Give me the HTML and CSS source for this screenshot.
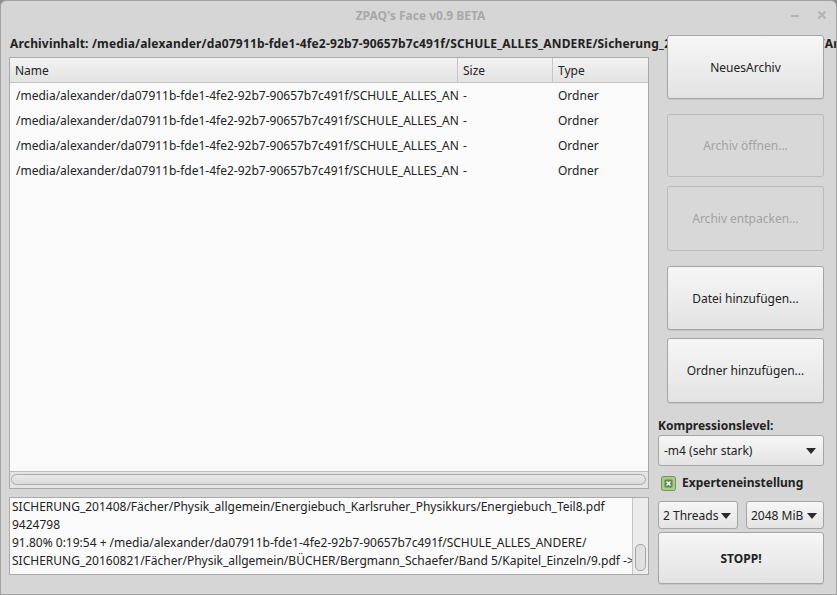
FILE: index.html
```html
<!DOCTYPE html>
<html lang="de">
<head>
    <meta charset="UTF-8">
    <meta name="viewport" content="width=device-width, initial-scale=1.0">
    <title>ZPAQ's Face v0.9 BETA</title>
    <link rel="stylesheet" href="styles.css">
</head>
<body>
    <div class="window">
        <!-- Title bar -->
        <div class="titlebar">
            <span class="title">ZPAQ's Face v0.9 BETA</span>
            <div class="controls">
                <svg width="10" height="10" viewBox="0 0 10 10"><rect x="1" y="5" width="8" height="2" fill="#b4b4b4"/></svg>
                <svg width="10" height="10" viewBox="0 0 10 10"><path d="M1.5 1.5 L8.5 8.5 M8.5 1.5 L1.5 8.5" stroke="#b4b4b4" stroke-width="2.2"/></svg>
            </div>
        </div>

        <!-- Main area -->
        <div class="content">
            <div class="path-label">Archivinhalt: /media/alexander/da07911b-fde1-4fe2-92b7-90657b7c491f/SCHULE_ALLES_ANDERE/Sicherung_20160821/Sicherung_New/Archiv.zpaq</div>

            <div class="tree">
                <div class="tree-header">
                    <div class="col name">Name</div>
                    <div class="col size">Size</div>
                    <div class="col type">Type</div>
                </div>
                <div class="tree-body">
                    <div class="row">
                        <div class="col name">/media/alexander/da07911b-fde1-4fe2-92b7-90657b7c491f/SCHULE_ALLES_ANDERE/</div>
                        <div class="col size">-</div>
                        <div class="col type">Ordner</div>
                    </div>
                    <div class="row">
                        <div class="col name">/media/alexander/da07911b-fde1-4fe2-92b7-90657b7c491f/SCHULE_ALLES_ANDERE/</div>
                        <div class="col size">-</div>
                        <div class="col type">Ordner</div>
                    </div>
                    <div class="row">
                        <div class="col name">/media/alexander/da07911b-fde1-4fe2-92b7-90657b7c491f/SCHULE_ALLES_ANDERE/</div>
                        <div class="col size">-</div>
                        <div class="col type">Ordner</div>
                    </div>
                    <div class="row">
                        <div class="col name">/media/alexander/da07911b-fde1-4fe2-92b7-90657b7c491f/SCHULE_ALLES_ANDERE/</div>
                        <div class="col size">-</div>
                        <div class="col type">Ordner</div>
                    </div>
                </div>
                <div class="hscroll"><div class="hscroll-track"></div></div>
            </div>

            <div class="log">
                <div class="log-text">
                    <div>SICHERUNG_201408/Fächer/Physik_allgemein/Energiebuch_Karlsruher_Physikkurs/Energiebuch_Teil8.pdf</div>
                    <div>9424798</div>
                    <div>91.80% 0:19:54 + /media/alexander/da07911b-fde1-4fe2-92b7-90657b7c491f/SCHULE_ALLES_ANDERE/</div>
                    <div>SICHERUNG_20160821/Fächer/Physik_allgemein/BÜCHER/Bergmann_Schaefer/Band 5/Kapitel_Einzeln/9.pdf -&gt;</div>
                </div>
                <div class="vscroll"><div class="vscroll-thumb"></div></div>
            </div>

            <!-- Right side controls -->
            <div class="sidebar">
                <button class="big">NeuesArchiv</button>
                <button class="big disabled b2">Archiv öffnen...</button>
                <button class="big disabled b3">Archiv entpacken...</button>
                <button class="big b4">Datei hinzufügen...</button>
                <button class="big b5">Ordner hinzufügen...</button>

                <p class="group-label">Kompressionslevel:</p>
                <div class="combo wide">-m4 (sehr stark)<span class="arrow"></span></div>

                <label class="check">
                    <svg width="15" height="15" viewBox="0 0 15 15">
                        <rect x="0.5" y="0.5" width="14" height="14" rx="2" fill="#a9c98e" stroke="#6f9652"/>
                        <rect x="3.5" y="3.5" width="8" height="8" rx="1" fill="#5f8a44"/>
                        <path d="M5.5 5.5 L9.5 9.5 M9.5 5.5 L5.5 9.5" stroke="#fff" stroke-width="1.5"/>
                    </svg>
                    Experteneinstellung
                </label>

                <div class="combo-row">
                    <div class="combo threads">2 Threads<span class="arrow"></span></div>
                    <div class="combo memory">2048 MiB<span class="arrow"></span></div>
                </div>
                <button class="stop">STOPP!</button>
            </div>
        </div>
    </div>
</body>
</html>
```

FILE: styles.css
```css
/* General */
* {
    margin: 0;
    padding: 0;
    box-sizing: border-box;
}
body {
    width: 837px;
    height: 595px;
    background: #8c8c8c;
    font-family: 'Noto Sans', 'DejaVu Sans', sans-serif;
    font-size: 12px;
    color: #222;
    overflow: hidden;
}
.window {
    width: 837px;
    height: 595px;
    background: #d6d6d6;
    border: 1px solid #a2a2a2;
    border-radius: 6px 6px 0 0;
    display: flex;
    flex-direction: column;
}
/* Title bar */
.titlebar {
    position: relative;
    height: 28px;
    display: flex;
    align-items: center;
    justify-content: center;
}
.title {
    color: #a8a8a8;
    font-weight: 700;
    font-size: 12px;
    margin-left: 4px;
}
.controls {
    position: absolute;
    right: 9px;
    top: 9px;
    display: flex;
    gap: 17px;
}
/* Content grid */
.content {
    flex: 1;
    display: grid;
    grid-template-columns: 640px 166px;
    grid-template-rows: 22px 432px 94px;
    column-gap: 9px;
    padding: 6px 0 0 8px;
}
.path-label {
    grid-column: 1 / 3;
    grid-row: 1;
    width: 827px;
    white-space: nowrap;
    overflow: hidden;
    font-weight: 700;
    font-size: 12px;
    letter-spacing: .17px;
    line-height: 16px;
    padding-top: 1px;
    padding-left: 1px;
}
/* Tree view */
.tree {
    grid-column: 1;
    grid-row: 2;
    background: #fafafa;
    border: 1px solid #a9a9a9;
    display: flex;
    flex-direction: column;
}
.tree-header, .row {
    display: flex;
}
.tree-header {
    height: 25px;
    align-items: center;
    background: linear-gradient(#f3f3f3, #e2e2e2);
    border-bottom: 1px solid #c4c4c4;
}
.tree-header .col {
    height: 100%;
    display: flex;
    align-items: center;
    border-right: 1px solid #c6c6c6;
}
.col {
    padding-left: 5px;
    white-space: nowrap;
    overflow: hidden;
}
.col.name { width: 448px; }
.col.size { width: 95px; }
.col.type { flex: 1; }
.tree-header .col.type { border-right: none; }
.tree-body {
    flex: 1;
}
.row {
    height: 25px;
    align-items: center;
}
.row .col.name { padding-left: 6px; }
.hscroll {
    height: 17px;
    border-top: 1px solid #bdbdbd;
    background: #e4e4e4;
    padding: 2px 2px 2px 1px;
}
.hscroll-track {
    height: 11px;
    border: 1px solid #ababab;
    border-radius: 6px;
    background: linear-gradient(#e9e9e9, #dadada);
}
/* Log box */
.log {
    grid-column: 1;
    grid-row: 3;
    margin: 8px 0;
    background: #fafafa;
    border: 1px solid #a9a9a9;
    display: flex;
}
.log-text {
    flex: 1;
    padding: 0 0 0 2px;
    line-height: 18px;
    white-space: nowrap;
    overflow: hidden;
}
.vscroll {
    width: 16px;
    border-left: 1px solid #c6c6c6;
    background: #ececec;
    display: flex;
    flex-direction: column;
    justify-content: flex-end;
    padding: 0 2px 3px 2px;
}
.vscroll-thumb {
    height: 27px;
    border: 1px solid #a4a4a4;
    border-radius: 5px;
    background: #e0e0e0;
}
/* Sidebar */
.sidebar {
    grid-column: 2;
    grid-row: 1 / 4;
    z-index: 1;
    display: flex;
    flex-direction: column;
}
.sidebar > * {
    flex-shrink: 0;
}
button {
    font-family: 'Noto Sans', 'DejaVu Sans', sans-serif;
    font-size: 12px;
    color: #222;
    border: 1px solid #a5a5a5;
    border-radius: 3px;
    background: linear-gradient(#f6f6f6, #e3e3e3);
    box-shadow: 0 1px 0 rgba(0,0,0,.08);
}
button.big {
    margin-left: 9px;
    width: 157px;
    height: 64px;
}
button.b2 { margin-top: 15px; height: 63px; }
button.b3 { margin-top: 9px; height: 65px; }
button.b4 { margin-top: 15px; }
button.b5 { margin-top: 8px; height: 65px; }
button.disabled {
    color: #a3a3a3;
    background: #d8d8d8;
    border-color: #bcbcbc;
    box-shadow: none;
}
.group-label {
    font-weight: 700;
    margin-top: 15px;
    line-height: 16px;
}
.combo {
    position: relative;
    height: 31px;
    margin-top: 1px;
    padding-left: 5px;
    display: flex;
    align-items: center;
    white-space: nowrap;
    overflow: hidden;
    border: 1px solid #a5a5a5;
    border-radius: 3px;
    background: linear-gradient(#f6f6f6, #e4e4e4);
}
.arrow {
    position: absolute;
    right: 7px;
    top: 12px;
    width: 0;
    height: 0;
    border-left: 5px solid transparent;
    border-right: 5px solid transparent;
    border-top: 6px solid #2a2a2a;
}
.check {
    display: flex;
    align-items: center;
    gap: 6px;
    margin-top: 9px;
    margin-left: 3px;
    font-weight: 700;
    line-height: 16px;
}
.combo-row {
    display: flex;
    gap: 8px;
    margin-top: 10px;
}
.combo-row .combo {
    height: 28px;
    margin-top: 0;
    padding-left: 4px;
}
.combo-row .arrow { top: 11px; right: 6px; }
.threads { width: 80px; padding-right: 20px; }
.memory { width: 78px; padding-right: 18px; }
.stop {
    margin-top: 3px;
    height: 52px;
    width: 166px;
    font-weight: 700;
}
```
